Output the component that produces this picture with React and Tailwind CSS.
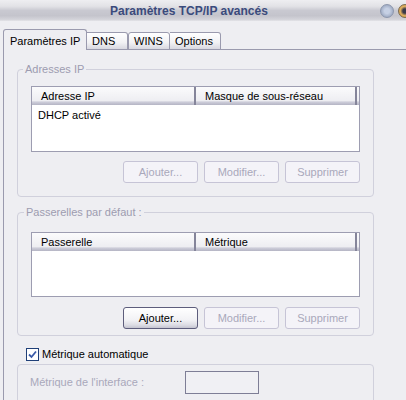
import React from 'react';

const disabledBtn =
  'h-[22px] w-[75px] rounded-[3px] border border-[#c6c4d6] bg-[#f4f3f8] text-[#a9a8bb] flex items-center justify-center';
const enabledBtn =
  'h-[22px] w-[75px] rounded-[3px] border border-[#5d5d7c] bg-[linear-gradient(to_bottom,#ffffff_0%,#f2f2f5_60%,#dcdce4_85%,#c4c4d0_100%)] text-black flex items-center justify-center';

function ListView({ cols, rows, height }) {
  return (
    <div className={`border border-[#9d9db1] bg-white ${height}`}>
      <div className="flex h-[18px] bg-[linear-gradient(to_bottom,#fbfbfc_0%,#eeeef2_75%,#cdcdd9_84%,#b4b4c4_100%)]">
        <div className="w-[164px] pl-[9px] border-r-2 border-[#85859a] flex items-center">{cols[0]}</div>
        <div className="w-[161px] pl-[9px] border-r-2 border-[#85859a] flex items-center">{cols[1]}</div>
      </div>
      {rows.map((r) => (
        <div key={r} className="mt-[3px] pl-[6px] leading-[14px]">
          {r}
        </div>
      ))}
    </div>
  );
}

function Buttons({ addEnabled, top }) {
  return (
    <div className={`flex justify-end gap-[6px] ${top}`}>
      <button className={addEnabled ? enabledBtn : disabledBtn}>Ajouter...</button>
      <button className={disabledBtn}>Modifier...</button>
      <button className={disabledBtn}>Supprimer</button>
    </div>
  );
}

export default function App() {
  return (
    <div className="w-[406px] h-[400px] overflow-hidden bg-[#eeeef2] text-[11px] text-black font-['Liberation_Sans',sans-serif]">
      {/* title bar */}
      <div className="h-[21px] flex items-center pl-[110px] bg-[linear-gradient(to_bottom,#eeeef1_0%,#e2e2e6_30%,#c9c9d1_50%,#c4c4cc_75%,#d6d6dc_95%,#e6e6ea_100%)]">
        <span className="font-bold text-[12px] text-[#3a4a7c]">Paramètres TCP/IP avancés</span>
        <div className="ml-auto flex items-center gap-[4px] -mr-[6px]">
          <div className="h-[14px] w-[14px] rounded-full border border-[#8d97ad] bg-[radial-gradient(circle,#c6d0e4_30%,#a2aec6_70%)]" />
          <div className="h-[14px] w-[14px] rounded-full border border-[#7a6a4e] bg-[radial-gradient(circle,#3a3a4a_25%,#e0b060_55%,#c08a3a_100%)]" />
        </div>
      </div>

      {/* tabs */}
      <div className="pl-[3px] pt-[8px]">
        <div className="relative z-10 flex items-end h-[21px]">
          <div className="h-[21px] w-[84px] pl-[6px] pt-[3px] border border-b-0 border-[#9a9aae] rounded-t-[3px] bg-[#eeeef2]">
            Paramètres IP
          </div>
          <div className="h-[18px] w-[41px] pl-[5px] flex items-center border border-l-0 border-[#9a9aae] rounded-tr-[3px] bg-[linear-gradient(to_bottom,#ffffff_0%,#f1f1f4_60%,#d8d8e0_100%)]">
            DNS
          </div>
          <div className="h-[18px] w-[42px] pl-[5px] flex items-center border border-[#9a9aae] rounded-t-[3px] bg-[linear-gradient(to_bottom,#ffffff_0%,#f1f1f4_60%,#d8d8e0_100%)]">
            WINS
          </div>
          <div className="h-[18px] w-[51px] pl-[5px] flex items-center border border-l-0 border-[#9a9aae] rounded-tr-[3px] bg-[linear-gradient(to_bottom,#ffffff_0%,#f1f1f4_60%,#d8d8e0_100%)]">
            Options
          </div>
        </div>

        {/* panel */}
        <div className="-mt-px w-[480px] h-[400px] border-l border-t border-[#9a9aae] bg-[#eeeef2] pl-[13px] pt-[13px]">
          <fieldset className="w-[357px] border border-[#d0d0dc] rounded-[4px] px-[13px] pt-[10px] pb-[13px]">
            <legend className="-ml-[8px] px-[2px] leading-[13px] text-[#9d9cb0]">Adresses IP</legend>
            <ListView cols={['Adresse IP', 'Masque de sous-réseau']} rows={['DHCP activé']} height="h-[66px]" />
            <Buttons top="mt-[9px]" />
          </fieldset>

          <fieldset className="mt-[9px] w-[357px] border border-[#d0d0dc] rounded-[4px] px-[13px] pt-[13px] pb-[6px]">
            <legend className="-ml-[7px] px-[2px] leading-[13px] text-[#9d9cb0]">Passerelles par défaut :</legend>
            <ListView cols={['Passerelle', 'Métrique']} rows={[]} height="h-[65px]" />
            <Buttons addEnabled top="mt-[10px]" />
          </fieldset>

          <label className="mt-[12px] ml-[9px] flex items-center gap-[3px] h-[13px]">
            <span className="h-[13px] w-[13px] border border-[#1f3f78] bg-white flex items-center justify-center">
              <svg width="9" height="9" viewBox="0 0 9 9">
                <path d="M1 4.5 L3.5 7 L8 1.5" fill="none" stroke="#3a5aa8" strokeWidth="1.8" />
              </svg>
            </span>
            <span>Métrique automatique</span>
          </label>

          <div className="mt-[3px] w-[357px] h-[60px] border border-[#d0d0dc] rounded-[4px] pl-[12px] pt-[6px] flex items-start">
            <div className="w-[155px] h-[23px] flex items-center text-[#a9a8bb]">Métrique de l'interface :</div>
            <div className="w-[74px] h-[23px] border border-[#7e7e96] bg-[#f0f0f4]" />
          </div>
        </div>
      </div>
    </div>
  );
}
